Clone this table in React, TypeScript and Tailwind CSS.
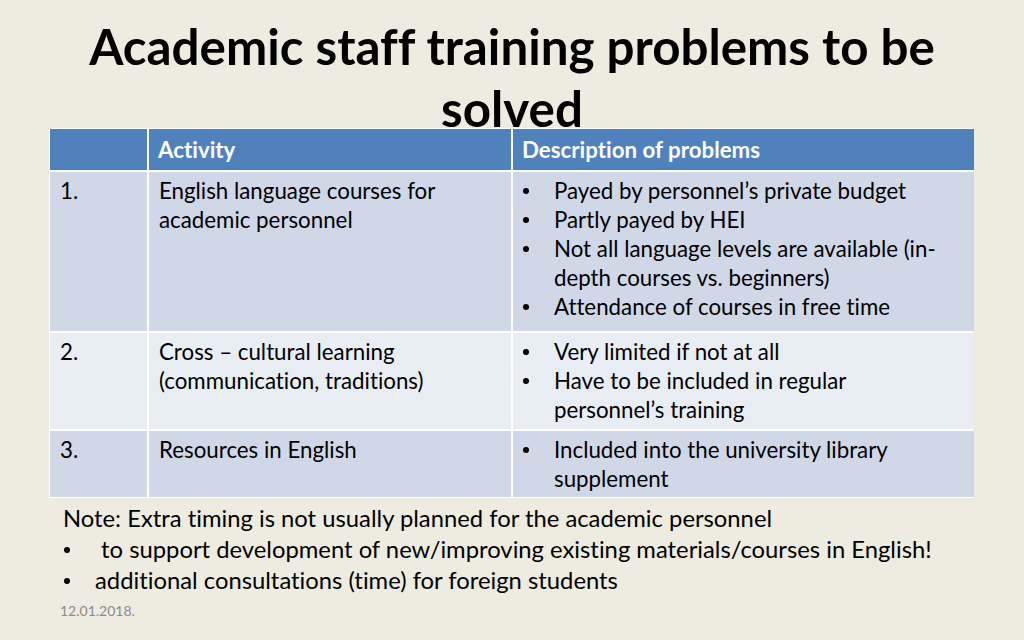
import React from "react";

const font = { fontFamily: "Lato, 'Liberation Sans', sans-serif" };

function Dot({ cls }: { cls: string }) {
  return (
    <span className={`shrink-0 flex items-center ${cls}`}>
      <span className="block w-[6px] h-[6px] rounded-full bg-black" />
    </span>
  );
}

function Bullets({ items }: { items: string[] }) {
  return (
    <ul className="flex flex-col">
      {items.map((t, i) => (
        <li key={i} className="flex">
          <Dot cls="w-[41px] pl-[10px] h-[29px]" />
          <span>{t}</span>
        </li>
      ))}
    </ul>
  );
}

export default function App() {
  const cell = "text-[22.3px] leading-[29px] text-black pt-[4px] px-[10px]";
  return (
    <div
      className="w-[1024px] h-[640px] bg-[#eeece1] overflow-hidden relative [font-variant-ligatures:none]"
      style={font}
    >
      <div className="h-[128px] pt-[15px] flex justify-center">
        <h1 className="text-[49.3px] leading-[62px] font-bold text-black text-center w-[870px]">
          Academic staff training problems to be solved
        </h1>
      </div>
      <div className="relative z-10 ml-[49px] w-[924px] bg-white p-[1px] grid grid-cols-[97px_362px_461px] grid-rows-[41px_159px_96px_66px] gap-[2px]">
        <div className="bg-[#4f81bd]" />
        <div className="bg-[#4f81bd] text-white font-bold text-[22.3px] leading-[29px] px-[9px] pt-[6px]">Activity</div>
        <div className="bg-[#4f81bd] text-white font-bold text-[22.3px] leading-[29px] px-[9px] pt-[6px]">Description of problems</div>

        <div className={`bg-[#d0d8e8] ${cell}`}>1.</div>
        <div className={`bg-[#d0d8e8] ${cell}`}>English language courses for academic personnel</div>
        <div className={`bg-[#d0d8e8] ${cell} !pl-0 !pr-[22px]`}>
          <Bullets
            items={[
              "Payed by personnel’s private budget",
              "Partly payed by HEI",
              "Not all language levels are available (in-depth courses vs. beginners)",
              "Attendance of courses in free time",
            ]}
          />
        </div>

        <div className={`bg-[#e9edf4] ${cell}`}>2.</div>
        <div className={`bg-[#e9edf4] ${cell}`}>Cross – cultural learning (communication, traditions)</div>
        <div className={`bg-[#e9edf4] ${cell} !pl-0 !pr-[22px]`}>
          <Bullets items={["Very limited if not at all", "Have to be included in regular personnel’s training"]} />
        </div>

        <div className={`bg-[#d0d8e8] ${cell}`}>3.</div>
        <div className={`bg-[#d0d8e8] ${cell}`}>Resources in English</div>
        <div className={`bg-[#d0d8e8] ${cell} !pl-0 !pr-[22px]`}>
          <Bullets items={["Included into the university library supplement"]} />
        </div>
      </div>
      <div className="pl-[63px] pt-[5px] text-[23.8px] leading-[31px] text-black">
        <p>Note: Extra timing is not usually planned for the academic personnel</p>
        <p className="flex">
          <Dot cls="w-[32px] pl-[1px] h-[31px]" />
          <span>&nbsp;to support development of new/improving existing materials/courses in English!</span>
        </p>
        <p className="flex">
          <Dot cls="w-[32px] pl-[1px] h-[31px]" />
          <span>additional consultations (time) for foreign students</span>
        </p>
      </div>
      <div className="absolute left-[60px] top-[603px] text-[14px] leading-[16px] text-[#8b8b8b]">12.01.2018.</div>
    </div>
  );
}
